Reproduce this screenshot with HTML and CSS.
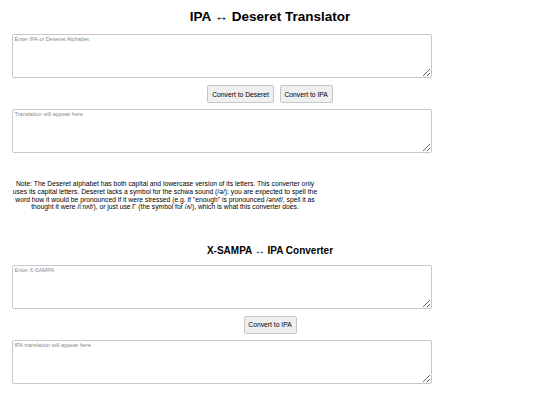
FILE: index.html
```html
<!DOCTYPE html>
<html lang="en">
<head>
<meta charset="utf-8">
<title>IPA ↔ Deseret Translator</title>
<link rel="stylesheet" href="styles.css">
</head>
<body>
<main class="page">
  <h1 class="title">IPA ↔ Deseret Translator</h1>
  <textarea class="box" placeholder="Enter IPA or Deseret Alphabet"></textarea>
  <div class="actions">
    <button class="btn" type="button">Convert to Deseret</button>
    <button class="btn" type="button">Convert to IPA</button>
  </div>
  <textarea class="box" placeholder="Translation will appear here" readonly></textarea>
  <p class="note">Note: The Deseret alphabet has both capital and lowercase version of its letters. This converter only uses its capital letters. Deseret lacks a symbol for the schwa sound (/ə/); you are expected to spell the word how it would be pronounced if it were stressed (e.g. if "enough" is pronounced /ənʌf/, spell it as thought it were /iːnʌf/), or just use 𐐊 (the symbol for /ʌ/), which is what this converter does.</p>
  <h2 class="subtitle">X-SAMPA ↔ IPA Converter</h2>
  <textarea class="box" placeholder="Enter X-SAMPA"></textarea>
  <div class="actions">
    <button class="btn" type="button">Convert to IPA</button>
  </div>
  <textarea class="box" placeholder="IPA translation will appear here" readonly></textarea>
</main>
</body>
</html>
```
FILE: styles.css
```css
html, body {
  margin: 0;
  padding: 0;
  background: #ffffff;
}

body {
  font-family: "Liberation Sans", Arial, sans-serif;
  color: #000;
}

.page {
  padding: 0 12px;
}

.title {
  margin: 9px 0 9px;
  font-size: 13.5px;
  line-height: 16px;
  font-weight: bold;
  text-align: center;
}

.subtitle {
  margin: 34px 0 8px;
  font-size: 10px;
  line-height: 11.5px;
  font-weight: bold;
  text-align: center;
}

.box {
  display: block;
  box-sizing: border-box;
  width: 420px;
  height: 44px;
  margin: 0;
  padding: 1px 1.5px;
  border: 1px solid #c8c8c8;
  border-radius: 2px;
  font-family: "Liberation Sans", Arial, sans-serif;
  font-size: 5.6px;
  line-height: 6.5px;
  color: #000;
  background: #fff;
  outline: none;
}

.box::placeholder {
  color: #8a8a8a;
}

.actions {
  display: flex;
  justify-content: center;
  gap: 6px;
  margin: 7px 0 6px;
}

.btn {
  box-sizing: border-box;
  height: 18px;
  margin: 0;
  padding: 0 3.8px;
  border: 1px solid #c6c6c6;
  border-radius: 2px;
  background: #efefef;
  font-family: "Liberation Sans", Arial, sans-serif;
  font-size: 6.75px;
  color: #000;
}

.note {
  width: 306px;
  margin: 27px 0 0;
  font-size: 6.75px;
  line-height: 7.8px;
  text-align: center;
}
```
